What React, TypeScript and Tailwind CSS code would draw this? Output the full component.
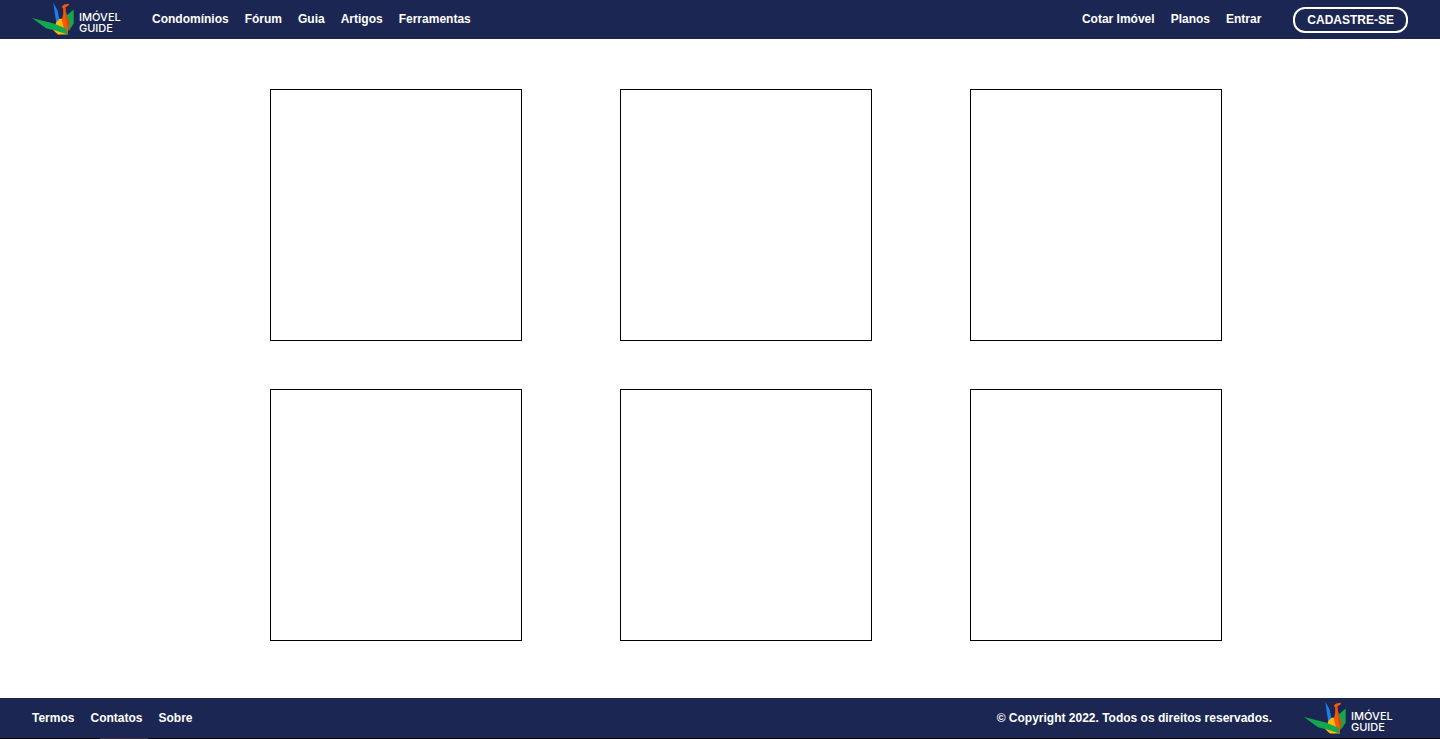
import React from "react";

const mainLinks = ["Condomínios", "Fórum", "Guia", "Artigos", "Ferramentas"];
const accountLinks = ["Cotar Imóvel", "Planos", "Entrar"];
const footerLinks = ["Termos", "Contatos", "Sobre"];
const cards = [1, 2, 3, 4, 5, 6];

function Logo() {
  return (
    <a href="#" className="flex w-[104px] shrink-0 items-center gap-1">
      <svg viewBox="0 0 43 38" className="h-[38px] w-[43px] shrink-0" aria-hidden="true">
        <path d="M21.2 2.8 25.6 10.5 27.2 18.8 24.5 24.5 22.8 13Z" fill="#1680f5" />
        <path d="M41.7 9.6V23.4L36.7 31 34.4 15.7Z" fill="#12a84f" />
        <path d="M24.3 22 27.5 18.8H31L36 34.6H26L21.5 30.5Z" fill="#ffb900" />
        <path
          d="M37 3.7 32 4.4 29.8 6.8 31.2 9 31.2 14 29.9 19.7 31.3 26 35.4 34.6 37.4 23 34.4 14 33.3 7.4 36.6 5.6Z"
          fill="#f4580b"
        />
        <path d="M32.6 9 33.5 8.6 34.4 14 37.4 23 36.2 30 33.8 19Z" fill="#d94a08" />
        <path d="M0 18 21.7 23.6 34 28.4 35.8 34.6 24 30.8 14 28.3Z" fill="#12a84f" />
      </svg>
      <span className="w-12 pt-2 font-['Inter',sans-serif] text-[11px] leading-[11px] font-medium">
        IMÓVEL GUIDE
      </span>
    </a>
  );
}

function LinkList({ items, label }: { items: string[]; label: string }) {
  return (
    <nav aria-label={label}>
      <ul className="flex gap-4">
        {items.map((item) => (
          <li key={item}>
            <a href="#" className="hover:underline">
              {item}
            </a>
          </li>
        ))}
      </ul>
    </nav>
  );
}

export default function App() {
  return (
    <div className="flex min-h-screen flex-col bg-white font-['Liberation_Sans',Arial,sans-serif] text-xs font-bold text-white">
      <header className="flex h-[39px] items-center justify-between bg-[#1c2652] px-8 pb-px">
        <div className="flex items-center gap-4">
          <Logo />
          <LinkList items={mainLinks} label="Principal" />
        </div>
        <div className="flex items-center gap-8">
          <LinkList items={accountLinks} label="Conta" />
          <button
            type="button"
            className="mt-0.5 h-[26px] rounded-xl border-2 border-white px-3"
          >
            CADASTRE-SE
          </button>
        </div>
      </header>

      <main className="flex grow justify-center pt-[50px] pb-12 pl-[52px]">
        <div className="grid grid-cols-3 content-start gap-x-[98px] gap-y-12">
          {cards.map((card) => (
            <section key={card} className="size-[252px] border border-black" />
          ))}
        </div>
      </main>

      <footer>
        <div className="flex h-10 items-center justify-between bg-[#1c2652] px-8">
          <LinkList items={footerLinks} label="Rodapé" />
          <div className="flex items-center gap-8">
            <p>© Copyright 2022. Todos os direitos reservados.</p>
            <Logo />
          </div>
        </div>
        <div className="bg-black pl-[100px]">
          <div className="h-px w-12 bg-[#3a3335]" />
        </div>
      </footer>
    </div>
  );
}
